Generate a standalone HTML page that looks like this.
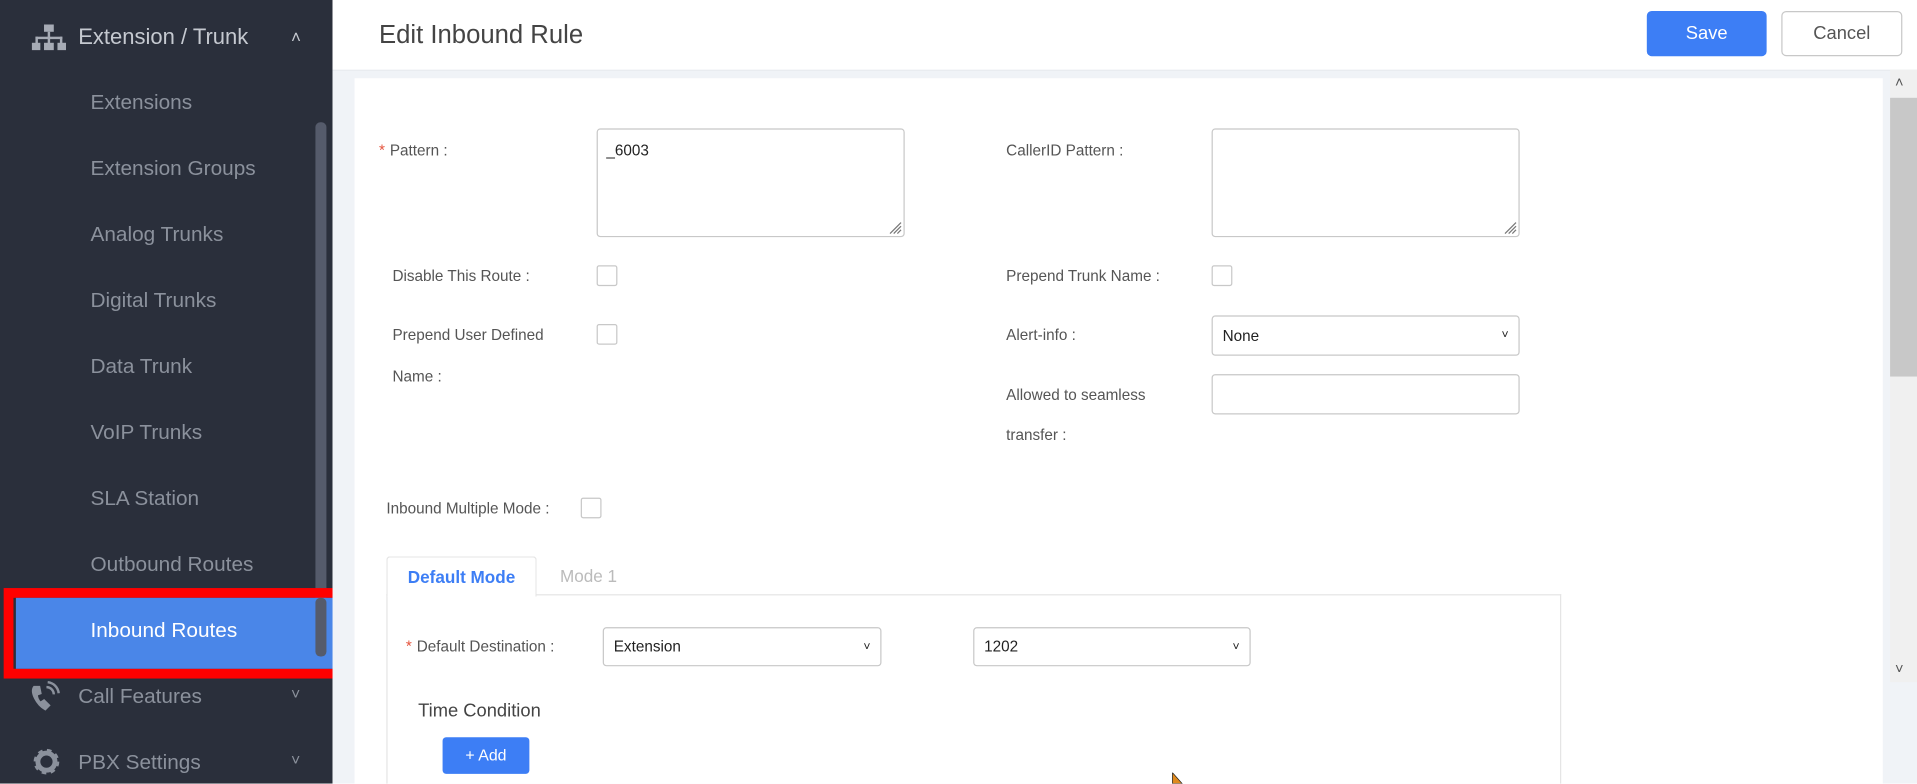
<!DOCTYPE html>
<html><head><meta charset="utf-8"><style>
*{box-sizing:border-box;margin:0;padding:0}
html,body{width:1917px;height:784px;overflow:hidden;background:#fff;font-family:"Liberation Sans",sans-serif}
#w{position:absolute;left:0;top:0;width:1568px;height:641px;transform:scale(1.22258);transform-origin:0 0;overflow:hidden}
.a{position:absolute}
.sb{left:0;top:0;width:272px;height:641px;background:#2a2f3b}
.si{position:absolute;left:74px;font-size:17px;color:#8b919c}
.lbl{position:absolute;font-size:12.5px;color:#555}
.box{position:absolute;border:1px solid #c8c8c8;border-radius:3px;background:#fff}
.cb{position:absolute;width:17px;height:17px;border:1px solid #c8c8c8;border-radius:2px;background:#fff}
.star{color:#e5533c;margin-right:4px}
.sel{font-size:12.5px;color:#222;padding:0 8px;display:flex;align-items:center;justify-content:space-between}
.grip{position:absolute;right:1px;bottom:1px}
</style></head><body><div id="w">
<div class="a sb"></div>
<svg class="a" style="left:26px;top:20px" width="28" height="22" viewBox="0 0 28 22" fill="#a6abb5"><rect x="10" y="0" width="8" height="6"/><rect x="13" y="6" width="2" height="5"/><rect x="3" y="10" width="22" height="2"/><rect x="3" y="10" width="2" height="6"/><rect x="13" y="10" width="2" height="6"/><rect x="23" y="10" width="2" height="6"/><rect x="0" y="15" width="7" height="6"/><rect x="10" y="15" width="8" height="6"/><rect x="21" y="15" width="7" height="6"/></svg>
<div class="a" style="left:64px;top:20px;font-size:18px;color:#c5c9d0">Extension / Trunk</div>
<div class="a" style="left:238px;top:22px;font-size:14px;color:#c5c9d0">&#x2C4;</div>
<div class="si" style="top:74px">Extensions</div>
<div class="si" style="top:128px">Extension Groups</div>
<div class="si" style="top:182px">Analog Trunks</div>
<div class="si" style="top:236px">Digital Trunks</div>
<div class="si" style="top:290px">Data Trunk</div>
<div class="si" style="top:344px">VoIP Trunks</div>
<div class="si" style="top:398px">SLA Station</div>
<div class="si" style="top:452px">Outbound Routes</div>
<div class="a" style="left:258px;top:100px;width:9px;height:436px;background:#555b6b;border-radius:4px"></div>
<div class="a" style="left:3px;top:481px;width:278px;height:74px;border:8px solid #ff0000"></div>
<div class="a" style="left:13px;top:489px;width:260px;height:58px;background:#4a86e8"></div>
<div class="a" style="left:258px;top:489px;width:9px;height:48px;background:#555b6b;border-radius:4px"></div>
<div class="si" style="top:506px;color:#fff">Inbound Routes</div>
<svg class="a" style="left:24px;top:556px" width="26" height="28" viewBox="0 0 26 28" fill="none" stroke="#8b919c" stroke-width="2"><path d="M4 6c-3 4 2 14 9 18l3-3-4-4-3 2c-2-2-3-5-3-7l3-1-1-5z" fill="#8b919c"/><path d="M14 6a6 6 0 0 1 6 6M15 2a10 10 0 0 1 9 9"/></svg>
<div class="a" style="left:64px;top:560px;font-size:17px;color:#8b919c">Call Features</div>
<div class="a" style="left:238px;top:560px;font-size:13px;color:#8b919c">&#x2C5;</div>
<svg class="a" style="left:26px;top:611px" width="24" height="24" viewBox="0 0 24 24"><circle cx="12" cy="12" r="8" fill="none" stroke="#8b919c" stroke-width="5" stroke-dasharray="3.2 3.1"/><circle cx="12" cy="12" r="7" fill="none" stroke="#8b919c" stroke-width="4"/></svg>
<div class="a" style="left:64px;top:614px;font-size:17px;color:#8b919c">PBX Settings</div>
<div class="a" style="left:238px;top:614px;font-size:13px;color:#8b919c">&#x2C5;</div>

<div class="a" style="left:272px;top:0;width:1296px;height:58px;background:#fff;border-bottom:1px solid #e6eaee"></div>
<div class="a" style="left:310px;top:17px;font-size:21px;color:#444">Edit Inbound Rule</div>
<div class="a" style="left:1347px;top:9px;width:98px;height:37px;background:#3d7ef5;border-radius:4px;color:#fff;font-size:15px;text-align:center;line-height:37px">Save</div>
<div class="a" style="left:1457px;top:9px;width:99px;height:37px;border:1px solid #c8c8c8;border-radius:4px;color:#555;font-size:15px;text-align:center;line-height:35px">Cancel</div>
<div class="a" style="left:272px;top:58px;width:1296px;height:583px;background:#f0f3f7"></div>
<div class="a" style="left:290px;top:64px;width:1250px;height:577px;background:#fff"></div>
<div class="a" style="left:1546px;top:57px;width:22px;height:501px;background:#f0f0f0"></div>
<div class="a" style="left:1546px;top:80px;width:22px;height:228px;background:#c8c8c8"></div>
<div class="a" style="left:1550px;top:60px;font-size:12px;color:#555">&#x2C4;</div>
<div class="a" style="left:1550px;top:540px;font-size:12px;color:#555">&#x2C5;</div>

<div class="lbl" style="left:310px;top:116px"><span class="star">*</span>Pattern :</div>
<div class="box" style="left:488px;top:105px;width:252px;height:89px;padding:10px 7px;font-size:12.5px;color:#222">_6003<svg class="grip" width="12" height="12"><path d="M11 2L2 11M11 5L5 11M11 8L8 11" stroke="#777"/></svg></div>
<div class="lbl" style="left:823px;top:116px">CallerID Pattern :</div>
<div class="box" style="left:991px;top:105px;width:252px;height:89px"><svg class="grip" width="12" height="12"><path d="M11 2L2 11M11 5L5 11M11 8L8 11" stroke="#777"/></svg></div>
<div class="lbl" style="left:321px;top:219px">Disable This Route :</div>
<div class="cb" style="left:488px;top:217px"></div>
<div class="lbl" style="left:823px;top:219px">Prepend Trunk Name :</div>
<div class="cb" style="left:991px;top:217px"></div>
<div class="lbl" style="left:321px;top:267px">Prepend User Defined</div>
<div class="lbl" style="left:321px;top:301px">Name :</div>
<div class="cb" style="left:488px;top:265px"></div>
<div class="lbl" style="left:823px;top:267px">Alert-info :</div>
<div class="box sel" style="left:991px;top:258px;width:252px;height:33px"><span>None</span><span style="font-size:10px">&#x2C5;</span></div>
<div class="lbl" style="left:823px;top:316px">Allowed to seamless</div>
<div class="lbl" style="left:823px;top:349px">transfer :</div>
<div class="box" style="left:991px;top:306px;width:252px;height:33px"></div>
<div class="lbl" style="left:316px;top:409px">Inbound Multiple Mode :</div>
<div class="cb" style="left:475px;top:407px"></div>

<div class="a" style="left:316px;top:486px;width:961px;height:160px;border:1px solid #e5e5e5;border-bottom:none"></div>
<div class="a" style="left:316px;top:455px;width:123px;height:33px;border:1px solid #e5e5e5;border-bottom:none;background:#fff;border-radius:3px 3px 0 0;color:#3d7ef5;font-weight:bold;font-size:14px;text-align:center;line-height:33px">Default Mode</div>
<div class="a" style="left:458px;top:463px;font-size:14px;color:#bbb">Mode 1</div>
<div class="lbl" style="left:332px;top:522px"><span class="star">*</span>Default Destination :</div>
<div class="box sel" style="left:493px;top:513px;width:228px;height:32px"><span>Extension</span><span style="font-size:10px">&#x2C5;</span></div>
<div class="box sel" style="left:796px;top:513px;width:227px;height:32px"><span>1202</span><span style="font-size:10px">&#x2C5;</span></div>
<div class="a" style="left:342px;top:573px;font-size:15px;color:#444">Time Condition</div>
<div class="a" style="left:362px;top:603px;width:71px;height:30px;background:#3d7ef5;border-radius:3px;color:#fff;font-size:13px;text-align:center;line-height:30px">+ Add</div>
<svg class="a" style="left:958px;top:632px" width="10" height="10"><path d="M1 0 L9 9 L1 9z" fill="#e08a1e" stroke="#222" stroke-width=".6"/></svg>
</div></body></html>
